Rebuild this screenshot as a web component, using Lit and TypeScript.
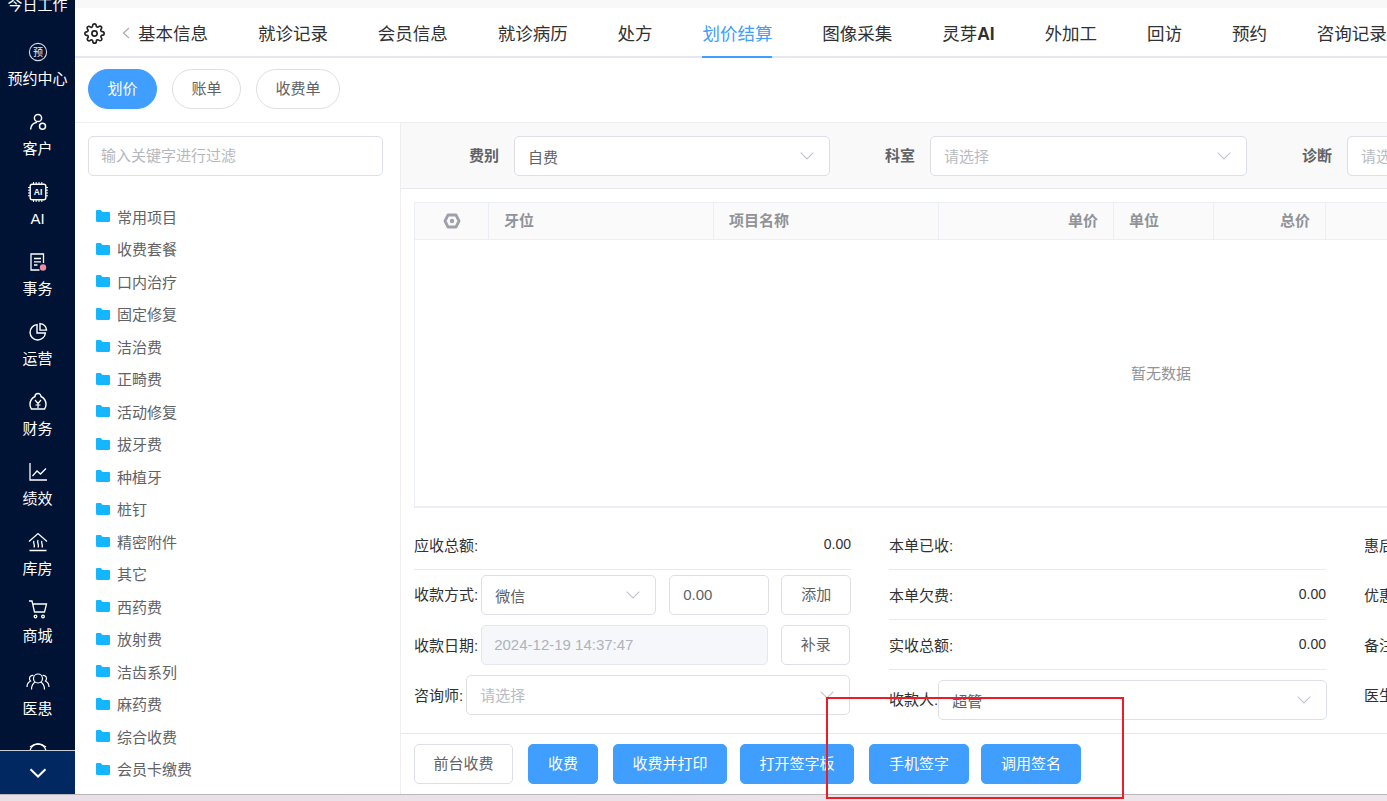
import { LitElement, html, css, svg } from "lit";
import { customElement } from "lit/decorators.js";

const icons: Record<string, any> = {
  yuyue: html`<svg viewBox="0 0 22 22" width="22" height="22"><circle cx="11" cy="11" r="8.6" fill="none" stroke="#d5dbe6" stroke-width="1.1"/><text x="11" y="14.6" text-anchor="middle" font-size="10" fill="#e8ecf3" font-family="Noto Sans CJK SC">预</text></svg>`,
  kehu: html`<svg viewBox="0 0 22 22" width="22" height="22" fill="none" stroke="#fff" stroke-width="1.5"><circle cx="11" cy="7" r="3.6"/><path d="M3.6 18.5c.3-4.2 2.6-6.6 6.4-7.2"/><circle cx="15.5" cy="15.2" r="3"/></svg>`,
  ai: html`<svg viewBox="0 0 22 22" width="22" height="22" fill="none" stroke="#fff"><rect x="3.2" y="3.2" width="15.6" height="15.6" rx="2" stroke-width="1.4"/><path d="M6.5 1v2M9.2 1v2M12 1v2M14.8 1v2M6.5 19v2M9.2 19v2M12 19v2M14.8 19v2M1 6.5h2M1 9.2h2M1 12h2M1 14.8h2M19 6.5h2M19 9.2h2M19 12h2M19 14.8h2" stroke-width="1"/><text x="11" y="14" text-anchor="middle" font-size="8.5" font-weight="700" fill="#fff" stroke="none" font-family="Liberation Sans">AI</text></svg>`,
  shiwu: html`<svg viewBox="0 0 22 22" width="22" height="22" fill="none" stroke="#fff" stroke-width="1.3"><path d="M16.5 12V3H4v16h8.5"/><path d="M7 7.5h7M7 10.8h7M7 14h3.5"/><circle cx="16" cy="16.5" r="3.2" fill="#f08ca0" stroke="none"/></svg>`,
  yunying: html`<svg viewBox="0 0 22 22" width="22" height="22" fill="none" stroke="#fff" stroke-width="1.4"><path d="M10 3.600a7.700 7.700 0 1 0 8.400 8.400H10z"/><path d="M13 2.600v6.500h6.500A6.800 6.800 0 0 0 13 2.600z"/></svg>`,
  caiwu: html`<svg viewBox="0 0 22 22" width="22" height="22" fill="none" stroke="#fff" stroke-width="1.4"><path d="M8 5.5a3 3 0 0 1 6 0c3 1.5 5 4.500 5 8 0 1.500-.5 3-1.500 4.500h-13C3.500 16.500 3 15 3 13.500c0-3.500 2-6.500 5-8z"/><path d="M8 9l3 3.500L14 9M11 12.500V17M8.500 14h5" stroke-width="1.200"/></svg>`,
  jixiao: html`<svg viewBox="0 0 22 22" width="22" height="22" fill="none" stroke="#fff" stroke-width="1.3"><path d="M3 2v17h17"/><path d="M5.500 15l4.500-5 3.500 3L19 7.500"/></svg>`,
  kufang: html`<svg viewBox="0 0 22 22" width="22" height="22" fill="none" stroke="#fff" stroke-width="1.3"><path d="M2 10.500L11 2.500l9 8"/><path d="M7 10c-1.500 2 1.500 3.500 0 6.500M11 9c-1.500 2.500 1.500 4 0 7.500M15 10c-1.500 2 1.500 3.500 0 6.500"/><path d="M2.500 19.500h17" stroke-width="1.500"/></svg>`,
  shangcheng: html`<svg viewBox="0 0 22 22" width="22" height="22" fill="none" stroke="#fff" stroke-width="1.3"><path d="M2 3h3l2.500 11h10L19.500 6H5.800"/><circle cx="8.500" cy="18.500" r="1.300"/><circle cx="16" cy="18.500" r="1.300"/></svg>`,
  yihuan: html`<svg viewBox="0 0 24 22" width="24" height="22" fill="none" stroke="#fff" stroke-width="1.200"><circle cx="12" cy="7.500" r="4.500"/><path d="M5.500 18.500c0-4 2-6.500 4-7.500M18.500 18.500c0-4-2-6.500-4-7.500"/><path d="M7.500 4.500c-2-.5-4 1-4 3 0 1 .5 2 1 2.500C2.500 11 1 13.500 1 16M16.500 4.500c2-.5 4 1 4 3 0 1-.5 2-1 2.500 2 1 3.500 3.500 3.500 6"/></svg>`,
  more: html`<svg viewBox="0 0 22 22" width="22" height="22" fill="none" stroke="#fff" stroke-width="1.300"><circle cx="11" cy="11" r="8"/><path d="M3 6c5-4 11-4 16 0"/></svg>`,
};

const nav: [string, string, number][] = [
  ["yuyue", "预约中心", 70], ["kehu", "客户", 70], ["ai", "AI", 70], ["shiwu", "事务", 70],
  ["yunying", "运营", 70], ["caiwu", "财务", 70], ["jixiao", "绩效", 70], ["kufang", "库房", 67],
  ["shangcheng", "商城", 73], ["yihuan", "医患", 70], ["more", "", 70],
];
const tabs = ["基本信息", "就诊记录", "会员信息", "就诊病历", "处方", "划价结算", "图像采集", "灵芽AI", "外加工", "回访", "预约", "咨询记录"];
const tree = ["常用项目", "收费套餐", "口内治疗", "固定修复", "洁治费", "正畸费", "活动修复", "拔牙费", "种植牙", "桩钉", "精密附件", "其它", "西药费", "放射费", "洁齿系列", "麻药费", "综合收费", "会员卡缴费"];

const caret = html`<svg class="caret" viewBox="0 0 14 8" width="14" height="8" fill="none" stroke="#c0c4cc" stroke-width="1.100"><path d="M.7.7L7 7l6.300-6.300"/></svg>`;
const folder = svg`<path d="M0 1.200C0 .5.500 0 1.200 0h3.600l1.700 2h6.300c.7 0 1.200.5 1.200 1.200v7.600c0 .7-.5 1.200-1.200 1.200H1.200C.5 12 0 11.500 0 10.800z" fill="#14b7ff"/>`;

@customElement("app-root")
export class AppRoot extends LitElement {
  static styles = css`
    :host {
      display: block; width: 1387px; height: 801px; overflow: hidden; position: relative;
      background: linear-gradient(90deg, #e9dfe7, #eee6ea);
      font-family: "Liberation Sans", "Noto Sans CJK SC", sans-serif; font-size: 15px; color: #606266;
    }
    .shell { display: flex; height: 794px; background: #fff; border-bottom: 1px solid #b9b7ba; }
    .side { width: 75px; flex: none; background: #001335; display: flex; flex-direction: column; color: #fff; }
    .side-list { flex: 1; min-height: 0; overflow: hidden; }
    .side-first { height: 20px; line-height: 20px; margin-top: -5px; margin-bottom: 15px; text-align: center; }
    .nav-item { display: flex; flex-direction: column; align-items: center; padding-top: 11px; box-sizing: border-box; }
    .nav-item svg { display: block; height: 22px; }
    .nav-label { margin-top: 6px; line-height: 20px; height: 20px; white-space: nowrap; }
    .side-foot { height: 44px; flex: none; box-sizing: border-box; border-top: 1px solid #c9ccd3; background: #012860; display: flex; align-items: center; justify-content: center; }
    .main { flex: 1; min-width: 0; display: flex; flex-direction: column; overflow: hidden; }
    .strip { height: 8px; flex: none; background: #f8f8f8; }
    .tabs { height: 50px; flex: none; box-sizing: border-box; border-bottom: 2px solid #e4e7ed; display: flex; align-items: stretch; padding-left: 9px; white-space: nowrap; }
    .gear { align-self: center; margin: 2px 17px 0 0; display: block; flex: none; }
    .back { align-self: center; margin: 2px 8px 0 0; display: block; flex: none; }
    .tab { font-size: 17.500px; color: #303133; line-height: 52px; height: 50px; box-sizing: border-box; margin-right: 49.900px; flex: none; }
    .tab.on { color: #409eff; border-bottom: 2px solid #409eff; }
    .tab b { font-weight: 700; }
    .pills { height: 65px; flex: none; box-sizing: border-box; border-bottom: 1px solid #eeeef1; padding: 11px 13px; display: flex; gap: 15px; }
    .pill { height: 40px; box-sizing: border-box; border: 1px solid #dcdfe6; border-radius: 20px; padding: 0 18.500px; line-height: 38px; color: #606266; }
    .pill.on { background: #409eff; border-color: #409eff; color: #fff; }
    .body { flex: 1; min-height: 0; display: flex; }
    .left { width: 325px; flex: none; box-sizing: border-box; padding: 13px 17px 0 13px; overflow: hidden; }
    .search { height: 40px; box-sizing: border-box; border: 1px solid #dcdfe6; border-radius: 5px; padding: 0 12px; line-height: 38px; color: #b4b7bd; }
    .tree { margin-top: 24px; padding-left: 8px; }
    .node { height: 32.500px; display: flex; align-items: center; gap: 7px; }
    .node svg { display: block; flex: none; }
    .right { flex: 1; min-width: 0; overflow: hidden; border-left: 1px solid #eeeef1; display: flex; flex-direction: column; }
    .filter { height: 66px; flex: none; box-sizing: border-box; background: #f9f9fa; border-bottom: 1px solid #e8e9ee; padding: 13px 0 0 13px; display: flex; white-space: nowrap; }
    .flabel { width: 85px; flex: none; box-sizing: border-box; text-align: right; font-weight: 700; line-height: 40px; margin-right: 15px; }
    .select { height: 40px; flex: none; box-sizing: border-box; background: #fff; border: 1px solid #dcdfe6; border-radius: 5px; padding: 0 15px 0 13px; display: flex; align-items: center; justify-content: space-between; color: #606266; white-space: nowrap; }
    .select.w316 { width: 316px; }
    .select.w317 { width: 317px; }
    .select.w175 { width: 175px; }
    .select.w384 { width: 384px; }
    .select.w389 { width: 389px; }
    .ph { color: #b9bcc2; position: relative; top: -1px; }
    .table { width: 1494px; height: 306px; flex: none; margin: 13px 0 0 13px; box-sizing: border-box; border: 1px solid #ebeef5; border-bottom-width: 2px; display: flex; flex-direction: column; }
    .thead { height: 37px; flex: none; box-sizing: border-box; border-bottom: 1px solid #ebeef5; background: #fafafa; display: grid; grid-template-columns: 74px 225px 225px 175px 100px 112px 1fr; font-weight: 700; color: #909399; }
    .th { box-sizing: border-box; border-right: 1px solid #ebeef5; padding: 0 15px; line-height: 36px; }
    .th.r { text-align: right; }
    .th.c { display: flex; align-items: center; justify-content: center; padding: 0; }
    .empty { flex: 1; display: flex; align-items: center; justify-content: center; color: #909399; padding-bottom: 2px; }
    .summary { margin: 12px 0 0 13px; display: grid; grid-template-columns: 437px 437px 300px; column-gap: 38px; color: #303133; }
    .row { height: 50px; box-sizing: border-box; display: flex; align-items: center; white-space: nowrap; }
    .row.line { border-bottom: 1px solid #e8e9ee; justify-content: space-between; padding-bottom: 1px; }
    .row.plain { padding-bottom: 2px; }
    .val { font-size: 14px; }
    .ctrl { padding-top: 5px; align-items: flex-start; }
    .lab { line-height: 40px; height: 38px; flex: none; margin-right: 3px; }
    .lab.low { line-height: 42px; }
    .lab.flush { margin-right: 0; }
    .input { width: 100px; height: 40px; flex: none; box-sizing: border-box; border: 1px solid #dcdfe6; border-radius: 5px; padding: 0 13px; line-height: 38px; color: #606266; margin: 0 12px 0 13px; }
    .date { width: 287px; height: 40px; flex: none; box-sizing: border-box; background: #f5f7fa; border: 1px solid #e4e7ed; border-radius: 5px; padding: 0 12px; line-height: 38px; color: #b0b3b9; margin-right: 13px; }
    .btn { height: 40px; flex: none; box-sizing: border-box; border: 1px solid #dcdfe6; border-radius: 5px; text-align: center; line-height: 38px; background: #fff; color: #606266; white-space: nowrap; }
    .btn.p { background: #409eff; border-color: #409eff; color: #fff; }
    .w70 { width: 70px; } .w69 { width: 69px; } .w99 { width: 99px; } .w114 { width: 114px; } .w100 { width: 100px; }
    .foot { margin-top: auto; height: 61px; flex: none; box-sizing: border-box; border-top: 1px solid #e4e7ed; padding: 10px 0 0 13px; display: flex; }
    .ml15 { margin-left: 15px; } .ml13 { margin-left: 13px; } .ml12 { margin-left: 12px; }
    .payee { padding-top: 10px; justify-content: space-between; }
    .mark { position: absolute; left: 826px; top: 697px; width: 298px; height: 102px; box-sizing: border-box; border: 2px solid #ed1c24; pointer-events: none; }
  `;

  render() {
    return html`
      <div class="shell">
        <aside class="side">
          <div class="side-list">
            <div class="side-first">今日工作</div>
            ${nav.map(([ic, label, h]) => html`
              <div class="nav-item" style="height:${h}px">${icons[ic]}<div class="nav-label">${label}</div></div>`)}
          </div>
          <div class="side-foot"><svg viewBox="0 0 18 10" width="18" height="10" fill="none" stroke="#fff" stroke-width="2"><path d="M1.500 1.200L9 8.500l7.500-7.300"/></svg></div>
        </aside>
        <div class="main">
          <div class="strip"></div>
          <div class="tabs">
            <svg class="gear" viewBox="0 0 24 24" width="21" height="21" fill="none" stroke="#222" stroke-width="1.900" stroke-linejoin="round"><circle cx="12" cy="12" r="3"/><path d="M19.400 15a1.650 1.650 0 0 0 .33 1.820l.06.06a2 2 0 1 1-2.830 2.830l-.06-.06a1.650 1.650 0 0 0-2.820 1.170V21a2 2 0 1 1-4 0v-.09a1.650 1.650 0 0 0-2.820-1.170l-.06.06a2 2 0 1 1-2.830-2.830l.06-.06a1.650 1.650 0 0 0-1.170-2.820H3a2 2 0 1 1 0-4h.09a1.650 1.650 0 0 0 1.170-2.820l-.06-.06a2 2 0 1 1 2.830-2.830l.06.06a1.650 1.650 0 0 0 2.820-1.170V3a2 2 0 1 1 4 0v.09a1.650 1.650 0 0 0 2.820 1.170l.06-.06a2 2 0 1 1 2.830 2.830l-.06.06a1.650 1.650 0 0 0 1.170 2.820H21a2 2 0 1 1 0 4h-.09a1.650 1.650 0 0 0-1.510 1.090z"/></svg>
            <svg class="back" viewBox="0 0 8 12" width="8" height="12" fill="none" stroke="#a8abb2" stroke-width="1.200"><path d="M7 1L1.500 6 7 11"/></svg>
            ${tabs.map((t) => html`<div class="tab ${t === "划价结算" ? "on" : ""}">${t === "灵芽AI" ? html`灵芽<b>AI</b>` : t}</div>`)}
          </div>
          <div class="pills">
            <div class="pill on">划价</div><div class="pill">账单</div><div class="pill">收费单</div>
          </div>
          <div class="body">
            <div class="left">
              <div class="search">输入关键字进行过滤</div>
              <div class="tree">
                ${tree.map((t) => html`<div class="node"><svg viewBox="0 0 14 12" width="14" height="12">${folder}</svg><span>${t}</span></div>`)}
              </div>
            </div>
            <div class="right">
              <div class="filter">
                <div class="flabel">费别</div>
                <div class="select w316"><span>自费</span>${caret}</div>
                <div class="flabel">科室</div>
                <div class="select w317"><span class="ph">请选择</span>${caret}</div>
                <div class="flabel">诊断</div>
                <div class="select w317"><span class="ph">请选择</span>${caret}</div>
              </div>
              <div class="table">
                <div class="thead">
                  <div class="th c"><svg viewBox="0 0 18 16" width="18" height="16" fill="none" stroke="#9ea1a8" stroke-width="2.800" stroke-linejoin="round"><path d="M5 2h8L16 8l-3 6H5L2 8z"/><circle cx="9" cy="8" r="2.200" fill="#9ea1a8" stroke="none"/></svg></div>
                  <div class="th">牙位</div><div class="th">项目名称</div><div class="th r">单价</div>
                  <div class="th">单位</div><div class="th r">总价</div><div class="th"></div>
                </div>
                <div class="empty">暂无数据</div>
              </div>
              <div class="summary">
                <div>
                  <div class="row line"><span>应收总额:</span><span class="val">0.00</span></div>
                  <div class="row ctrl"><span class="lab">收款方式:</span><div class="select w175"><span>微信</span>${caret}</div><div class="input">0.00</div><div class="btn w70">添加</div></div>
                  <div class="row ctrl"><span class="lab low">收款日期:</span><div class="date">2024-12-19 14:37:47</div><div class="btn w69">补录</div></div>
                  <div class="row ctrl"><span class="lab low">咨询师:</span><div class="select w384"><span class="ph">请选择</span>${caret}</div></div>
                </div>
                <div>
                  <div class="row line"><span>本单已收:</span><span></span></div>
                  <div class="row line"><span>本单欠费:</span><span class="val">0.00</span></div>
                  <div class="row line"><span>实收总额:</span><span class="val">0.00</span></div>
                  <div class="row ctrl payee"><span class="lab flush">收款人:</span><div class="select w389"><span>超管</span>${caret}</div></div>
                </div>
                <div>
                  <div class="row plain"><span>惠后总额:</span></div>
                  <div class="row plain"><span>优惠金额:</span></div>
                  <div class="row plain"><span>备注:</span></div>
                  <div class="row plain"><span>医生:</span></div>
                </div>
              </div>
              <div class="foot">
                <div class="btn w99">前台收费</div>
                <div class="btn p w70 ml15">收费</div>
                <div class="btn p w114 ml15">收费并打印</div>
                <div class="btn p w114 ml13">打开签字板</div>
                <div class="btn p w100 ml15">手机签字</div>
                <div class="btn p w100 ml12">调用签名</div>
              </div>
            </div>
          </div>
        </div>
      </div>
      <div class="mark"></div>
    `;
  }
}
